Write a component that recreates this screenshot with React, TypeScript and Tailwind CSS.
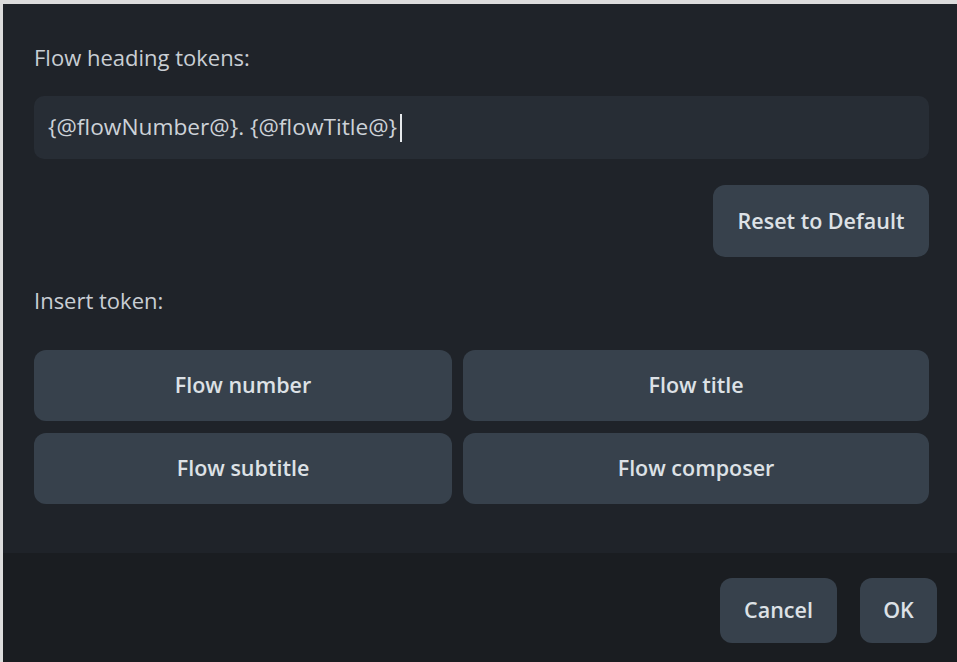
import React from "react";

const font = { fontFamily: '"Open Sans", "Noto Sans", sans-serif' };

function Btn({ children, className = "" }: { children: React.ReactNode; className?: string }) {
  return (
    <button
      className={`flex items-center justify-center rounded-[12px] bg-[#37414c] text-[21.5px] font-semibold text-[#dde1e6] ${className}`}
    >
      {children}
    </button>
  );
}

export default function App() {
  return (
    <div style={font} className="flex h-[662px] w-[957px] flex-col overflow-hidden border-l-[3px] border-t-[4px] border-[#dcdcdc] bg-[#1f2329]">
      <div className="flex flex-1 flex-col pl-[31px] pr-[28px]">
        <div className="mt-[41px] text-[22px] leading-[24px] text-[#c9ced4]">Flow heading tokens:</div>
        <div className="mt-[27px] flex h-[63px] items-center rounded-[10px] bg-[#272d35] px-[14px] text-[22.7px] text-[#cdd2d8]">
          <span>{"{@flowNumber@}. {@flowTitle@}"}</span>
          <span className="ml-[3px] h-[28px] w-[2px] bg-[#e6e9ec]" />
        </div>
        <div className="mt-[26px] flex justify-end">
          <Btn className="h-[72px] w-[216px]">Reset to Default</Btn>
        </div>
        <div className="mt-[31px] text-[22px] leading-[24px] text-[#c9ced4]">Insert token:</div>
        <div className="mt-[38px] grid grid-cols-[418px_1fr] gap-x-[11px] gap-y-[12px]">
          <Btn className="h-[71px]">Flow number</Btn>
          <Btn className="h-[71px]">Flow title</Btn>
          <Btn className="h-[71px]">Flow subtitle</Btn>
          <Btn className="h-[71px]">Flow composer</Btn>
        </div>
      </div>
      <div className="flex h-[109px] items-start justify-end gap-[23px] bg-[#1a1d21] pr-[20px] pt-[25px]">
        <Btn className="h-[65px] w-[117px] rounded-[10px]">Cancel</Btn>
        <Btn className="h-[65px] w-[77px] rounded-[10px]">OK</Btn>
      </div>
    </div>
  );
}
